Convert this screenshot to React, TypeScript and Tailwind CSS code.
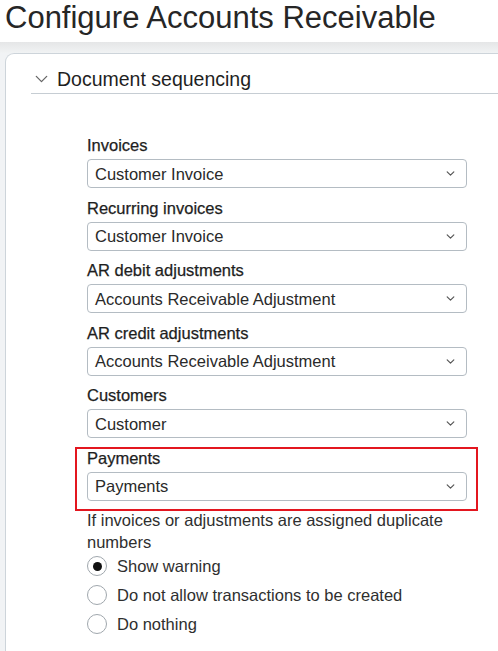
import { useState } from 'react'

const fields = [
  { label: 'Invoices', value: 'Customer Invoice' },
  { label: 'Recurring invoices', value: 'Customer Invoice' },
  { label: 'AR debit adjustments', value: 'Accounts Receivable Adjustment' },
  { label: 'AR credit adjustments', value: 'Accounts Receivable Adjustment' },
  { label: 'Customers', value: 'Customer' },
  { label: 'Payments', value: 'Payments', highlight: true },
]

const options = ['Show warning', 'Do not allow transactions to be created', 'Do nothing']

function Chevron({ className, width = 1.3 }: { className?: string; width?: number }) {
  return (
    <svg viewBox="0 0 10 6" className={className} fill="none" stroke="currentColor" strokeWidth={width} strokeLinecap="round" strokeLinejoin="round">
      <path d="M1 1l4 4 4-4" />
    </svg>
  )
}

function SelectBox({ value }: { value: string }) {
  return (
    <div className="flex h-[29px] items-center justify-between rounded-[4px] border border-[#b4bcc3] bg-white pl-[7px] pr-[11px] text-[16.5px] leading-[20px] text-[#2a2a2a]">
      <span>{value}</span>
      <Chevron className="h-[5px] w-[9px] text-[#555]" width={1.4} />
    </div>
  )
}

export default function App() {
  const [choice, setChoice] = useState(0)

  return (
    <div className="h-[651px] w-full overflow-hidden bg-white font-['Liberation_Sans',Arial,sans-serif]">
      <h1 className="h-[42px] pl-[5px] pt-[1px] text-[31px] leading-[34px] text-[#262626]">Configure Accounts Receivable</h1>
      <div className="h-[11px] bg-gradient-to-b from-[#e5e6e7] to-[#f1f3f4]" />
      <div className="bg-[#f1f3f5] pl-[5px]">
        <div className="min-h-[600px] rounded-tl-[9px] border-l border-t border-[#cdd4da] bg-white">
          <div className="ml-[25px] flex items-center gap-[9px] border-b border-[#c6cdd3] pb-[2px] pt-[13px] text-[19.5px] leading-[24px] text-[#1f1f1f]">
            <Chevron className="ml-[4px] h-[8px] w-[13px] text-[#666]" width={1} />
            <span>Document sequencing</span>
          </div>

          <div className="ml-[81px] mt-[41px] flex w-[380px] flex-col gap-[9.6px]">
            {fields.map((f) => (
              <div key={f.label} className="relative flex flex-col gap-[4px]">
                {f.highlight && (
                  <div className="pointer-events-none absolute -bottom-[10px] -left-[12px] -right-[11px] -top-[1px] border-2 border-[#e3161f]" />
                )}
                <label className="text-[16.5px] leading-[20px] text-[#1e1e1e] [-webkit-text-stroke:0.25px_#1e1e1e]">{f.label}</label>
                <SelectBox value={f.value} />
              </div>
            ))}
          </div>

          <div className="ml-[81px] mt-[8px] w-[380px] text-[16.5px] text-[#2f2f2f]">
            <p className="leading-[22px]">If invoices or adjustments are assigned duplicate numbers</p>
            <div className="-mt-[1px] flex flex-col">
              {options.map((o, i) => (
                <button key={o} onClick={() => setChoice(i)} className="flex h-[29px] items-center gap-[10px] text-left">
                  <span className="flex h-[20px] w-[20px] items-center justify-center rounded-full border border-[#a0a7ad] bg-white">
                    {choice === i && <span className="h-[9px] w-[9px] rounded-full bg-[#111]" />}
                  </span>
                  <span className="leading-[20px]">{o}</span>
                </button>
              ))}
            </div>
          </div>
        </div>
      </div>
    </div>
  )
}
